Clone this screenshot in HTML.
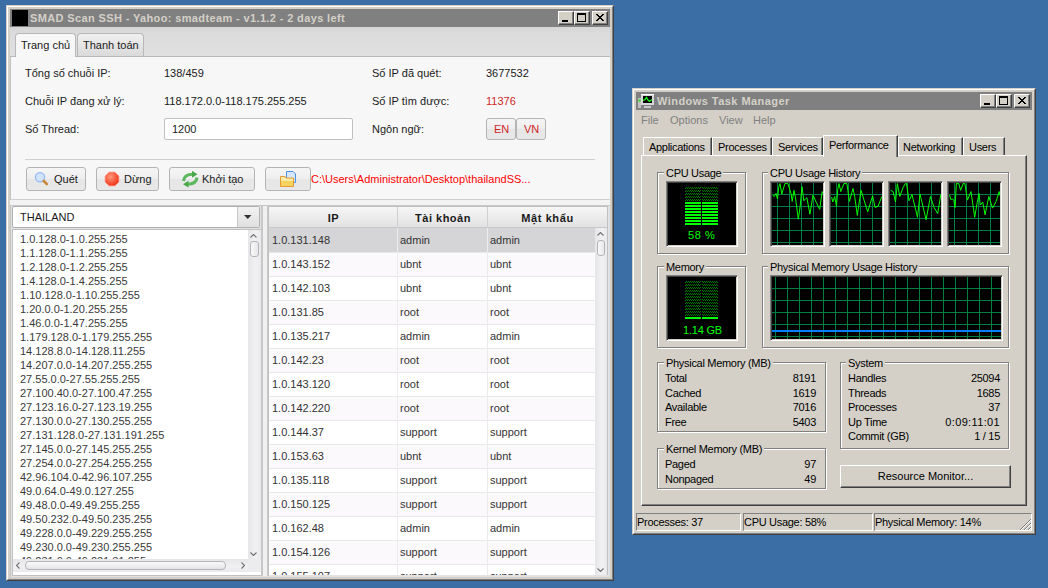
<!DOCTYPE html>
<html><head><meta charset="utf-8"><style>
*{box-sizing:border-box;margin:0;padding:0}
html,body{width:1048px;height:588px;overflow:hidden;background:#3a6ea5;font-family:"Liberation Sans",sans-serif;font-size:11px;color:#000}
.a{position:absolute}
.t{position:absolute;white-space:nowrap;line-height:13px;color:#1a1a1a}
.k{position:absolute;white-space:nowrap;line-height:13px;letter-spacing:-0.3px;color:#000}
.title{position:absolute;white-space:nowrap;line-height:13px;color:#d4d0c8;font-weight:bold}
.tb{position:absolute;width:16px;height:14px;background:#d4d0c8;border-top:1px solid #fff;border-left:1px solid #fff;border-right:1px solid #404040;border-bottom:1px solid #404040;box-shadow:inset -1px -1px 0 #808080}
.qbtn{position:absolute;border:1px solid #b4b4b4;border-radius:3px;background:linear-gradient(#f5f5f5,#eeeeee 50%,#e6e6e6 52%,#e8e8e8)}
.raised{position:absolute;background:#d4d0c8;border-top:1px solid #fff;border-left:1px solid #fff;border-right:1px solid #404040;border-bottom:1px solid #404040;box-shadow:inset -1px -1px 0 #808080}
.etch{position:absolute;border:1px solid #808080;box-shadow:1px 1px 0 #fff, inset 1px 1px 0 #fff}
.sunk{position:absolute;border-top:1px solid #808080;border-left:1px solid #808080;border-right:1px solid #fff;border-bottom:1px solid #fff}
</style></head><body>
<div class="a" style="left:6px;top:5px;width:608px;height:576px;background:#d4d0c8;border-top:1px solid #d4d0c8;border-left:1px solid #d4d0c8;border-right:1px solid #404040;border-bottom:1px solid #404040"><div class="a" style="left:0;top:0;right:0;bottom:0;border-top:1px solid #fff;border-left:1px solid #fff;border-right:1px solid #808080;border-bottom:1px solid #808080"></div></div>
<div class="a" style="left:10px;top:9px;width:600px;height:18px;background:#808080"></div>
<div class="a" style="left:12px;top:10px;width:16px;height:16px;background:#000"></div>
<div class="title" style="left:30px;top:12px;letter-spacing:0.37px">SMAD Scan SSH - Yahoo: smadteam - v1.1.2 - 2 days left</div>
<div class="tb" style="left:558px;top:11px"><div class="a" style="left:3px;top:8px;width:6px;height:2px;background:#000"></div></div>
<div class="tb" style="left:574px;top:11px"><div class="a" style="left:2px;top:1px;width:9px;height:9px;border:1px solid #000;border-top-width:2px"></div></div>
<div class="tb" style="left:592px;top:11px"><svg class="a" style="left:0;top:0" width="14" height="12" shape-rendering="crispEdges"><rect x="3" y="2" width="1" height="1"/><rect x="4" y="2" width="1" height="1"/><rect x="9" y="2" width="1" height="1"/><rect x="10" y="2" width="1" height="1"/><rect x="4" y="3" width="1" height="1"/><rect x="5" y="3" width="1" height="1"/><rect x="8" y="3" width="1" height="1"/><rect x="9" y="3" width="1" height="1"/><rect x="5" y="4" width="1" height="1"/><rect x="6" y="4" width="1" height="1"/><rect x="7" y="4" width="1" height="1"/><rect x="8" y="4" width="1" height="1"/><rect x="6" y="5" width="1" height="1"/><rect x="7" y="5" width="1" height="1"/><rect x="5" y="6" width="1" height="1"/><rect x="6" y="6" width="1" height="1"/><rect x="7" y="6" width="1" height="1"/><rect x="8" y="6" width="1" height="1"/><rect x="4" y="7" width="1" height="1"/><rect x="5" y="7" width="1" height="1"/><rect x="8" y="7" width="1" height="1"/><rect x="9" y="7" width="1" height="1"/><rect x="3" y="8" width="1" height="1"/><rect x="4" y="8" width="1" height="1"/><rect x="9" y="8" width="1" height="1"/><rect x="10" y="8" width="1" height="1"/></svg></div>
<div class="a" style="left:10px;top:27px;width:600px;height:550px;background:#e2e2e2"></div>
<div class="a" style="left:10px;top:27px;width:600px;height:29px;background:linear-gradient(#d6d6d6,#dcdcdc 25%,#e0e0e0)"></div>
<div class="a" style="left:10px;top:206px;width:1px;height:371px;background:#c4c4c4"></div>
<div class="a" style="left:15px;top:33px;width:61px;height:24px;background:#f7f7f7;border:1px solid #b8b8b8;border-bottom:none;border-radius:4px 4px 0 0"></div>
<div class="t" style="left:21px;top:39px;">Trang chủ</div>
<div class="a" style="left:77px;top:33px;width:67px;height:23px;background:linear-gradient(#f0f0f0,#dadada);border:1px solid #b8b8b8;border-bottom:none;border-radius:4px 4px 0 0"></div>
<div class="t" style="left:83px;top:39px;">Thanh toán</div>
<div class="a" style="left:10px;top:56px;width:600px;height:144px;background:#f7f7f7;border-top:1px solid #b8b8b8;border-left:1px solid #c4c4c4;border-bottom:1px solid #d0d0d0"></div>
<div class="a" style="left:10px;top:200px;width:600px;height:5px;background:#f3f3f3"></div>
<div class="a" style="left:10px;top:205px;width:600px;height:1px;background:#c8c8c8"></div>
<div class="a" style="left:16px;top:56px;width:59px;height:1px;background:#f7f7f7"></div>
<div class="t" style="left:25px;top:67px;">Tổng số chuỗi IP:</div>
<div class="t" style="left:25px;top:95px;">Chuỗi IP đang xử lý:</div>
<div class="t" style="left:25px;top:123px;">Số Thread:</div>
<div class="t" style="left:164px;top:67px;">138/459</div>
<div class="t" style="left:164px;top:95px;">118.172.0.0-118.175.255.255</div>
<div class="a" style="left:164px;top:118px;width:189px;height:22px;background:#fff;border:1px solid #c0c0c0;border-radius:2px"></div>
<div class="t" style="left:172px;top:123px;">1200</div>
<div class="t" style="left:372px;top:67px;">Số IP đã quét:</div>
<div class="t" style="left:372px;top:95px;">Số IP tìm được:</div>
<div class="t" style="left:372px;top:123px;">Ngôn ngữ:</div>
<div class="t" style="left:486px;top:67px;">3677532</div>
<div class="t" style="left:486px;top:95px;color:#d02828">11376</div>
<div class="qbtn" style="left:486px;top:118px;width:30px;height:22px"></div>
<div class="t" style="left:494px;top:123px;color:#d02828">EN</div>
<div class="qbtn" style="left:516px;top:118px;width:30px;height:22px"></div>
<div class="t" style="left:524px;top:123px;color:#d02828">VN</div>
<div class="a" style="left:25px;top:159px;width:570px;height:1px;background:#d0d0d0"></div>
<div class="qbtn" style="left:26px;top:167px;width:60px;height:24px"></div>
<div class="t" style="left:54px;top:173px;">Quét</div>
<div class="qbtn" style="left:96px;top:167px;width:63px;height:24px"></div>
<div class="t" style="left:124px;top:173px;">Dừng</div>
<div class="qbtn" style="left:169px;top:167px;width:86px;height:24px"></div>
<div class="t" style="left:202px;top:173px;">Khởi tạo</div>
<div class="qbtn" style="left:265px;top:167px;width:46px;height:24px"></div>
<div class="t" style="left:311px;top:173px;color:#ff0000">C:\Users\Administrator\Desktop\thailandSS...</div>
<svg class="a" style="left:0;top:0" width="320" height="200"><defs><radialGradient id="rg" cx="0.4" cy="0.35" r="0.7"><stop offset="0" stop-color="#ff9a7a"/><stop offset="1" stop-color="#f02a10"/></radialGradient><linearGradient id="gg" x1="0" y1="0" x2="0" y2="1"><stop offset="0" stop-color="#8ed88a"/><stop offset="1" stop-color="#3a9a3a"/></linearGradient></defs><circle cx="40" cy="177.3" r="4.6" fill="#d2e4fb" stroke="#92baf0" stroke-width="1.3"/><line x1="43.6" y1="180.8" x2="46.8" y2="184" stroke="#c8873c" stroke-width="2.6" stroke-linecap="round"/><polygon points="109.1,172 114.9,172 119,176.1 119,181.9 114.9,186 109.1,186 105,181.9 105,176.1" fill="url(#rg)" stroke="#ffb0a0" stroke-width="0.9"/><path d="M183.5,181 C184,175.5 188,174.2 193,174.2" fill="none" stroke="#5cb85c" stroke-width="3"/><polygon points="192,170.8 197.5,174.3 192,177.8" fill="#4aa84a"/><path d="M197,177.5 C196.5,183 192.5,184.2 187.5,184.2" fill="none" stroke="#5cb85c" stroke-width="3"/><polygon points="188.5,180.8 183,184.2 188.5,187.6" fill="#4aa84a"/><path d="M286.5,171.5 H293 L295.5,174 V182.5 H286.5 Z" fill="#d6e6fb" stroke="#4f8fe0" stroke-width="1"/><path d="M280.5,176.5 H285 L286,178 H293.5 V186.5 H280.5 Z" fill="#fbeaa6" stroke="#e39a32" stroke-width="1"/><rect x="281" y="181" width="12" height="5" fill="#f6d25e"/></svg>
<div class="a" style="left:12px;top:206px;width:248px;height:22px;background:#fff;border:1px solid #b0b0b0;border-radius:2px"></div>
<div class="a" style="left:237px;top:207px;width:22px;height:20px;background:linear-gradient(#f2f2f2,#e0e0e0);border-left:1px solid #c8c8c8"></div>
<svg class="a" style="left:244px;top:215px" width="8" height="4"><polygon points="0,0 7.5,0 3.75,4" fill="#333"/></svg>
<div class="t" style="left:20px;top:211px;">THAILAND</div>
<div class="a" style="left:12px;top:229px;width:250px;height:347px;background:#fff;border:1px solid #c0c0c0"></div>
<div class="a" style="left:13px;top:230px;width:235px;height:329px;overflow:hidden">
<div class="t" style="left:7px;top:3px;color:#3a3a3a">1.0.128.0-1.0.255.255</div>
<div class="t" style="left:7px;top:17px;color:#3a3a3a">1.1.128.0-1.1.255.255</div>
<div class="t" style="left:7px;top:31px;color:#3a3a3a">1.2.128.0-1.2.255.255</div>
<div class="t" style="left:7px;top:45px;color:#3a3a3a">1.4.128.0-1.4.255.255</div>
<div class="t" style="left:7px;top:59px;color:#3a3a3a">1.10.128.0-1.10.255.255</div>
<div class="t" style="left:7px;top:73px;color:#3a3a3a">1.20.0.0-1.20.255.255</div>
<div class="t" style="left:7px;top:87px;color:#3a3a3a">1.46.0.0-1.47.255.255</div>
<div class="t" style="left:7px;top:101px;color:#3a3a3a">1.179.128.0-1.179.255.255</div>
<div class="t" style="left:7px;top:115px;color:#3a3a3a">14.128.8.0-14.128.11.255</div>
<div class="t" style="left:7px;top:129px;color:#3a3a3a">14.207.0.0-14.207.255.255</div>
<div class="t" style="left:7px;top:143px;color:#3a3a3a">27.55.0.0-27.55.255.255</div>
<div class="t" style="left:7px;top:157px;color:#3a3a3a">27.100.40.0-27.100.47.255</div>
<div class="t" style="left:7px;top:171px;color:#3a3a3a">27.123.16.0-27.123.19.255</div>
<div class="t" style="left:7px;top:185px;color:#3a3a3a">27.130.0.0-27.130.255.255</div>
<div class="t" style="left:7px;top:199px;color:#3a3a3a">27.131.128.0-27.131.191.255</div>
<div class="t" style="left:7px;top:213px;color:#3a3a3a">27.145.0.0-27.145.255.255</div>
<div class="t" style="left:7px;top:227px;color:#3a3a3a">27.254.0.0-27.254.255.255</div>
<div class="t" style="left:7px;top:241px;color:#3a3a3a">42.96.104.0-42.96.107.255</div>
<div class="t" style="left:7px;top:255px;color:#3a3a3a">49.0.64.0-49.0.127.255</div>
<div class="t" style="left:7px;top:269px;color:#3a3a3a">49.48.0.0-49.49.255.255</div>
<div class="t" style="left:7px;top:283px;color:#3a3a3a">49.50.232.0-49.50.235.255</div>
<div class="t" style="left:7px;top:297px;color:#3a3a3a">49.228.0.0-49.229.255.255</div>
<div class="t" style="left:7px;top:311px;color:#3a3a3a">49.230.0.0-49.230.255.255</div>
<div class="t" style="left:7px;top:325px;color:#3a3a3a">49.231.0.0-49.231.31.255</div>
</div>
<div class="a" style="left:248px;top:230px;width:13px;height:329px;background:linear-gradient(90deg,#e6e6e9,#f1f1f3 60%,#e9e9ec)"></div>
<svg class="a" style="left:250px;top:234px" width="7" height="4"><path d="M0.5,3.5 L3.5,0.5 L6.5,3.5" fill="none" stroke="#707070" stroke-width="1.1"/></svg>
<div class="a" style="left:250px;top:241px;width:9px;height:16px;border:1px solid #b4b4b8;border-radius:3px;background:linear-gradient(90deg,#f8f8f8,#e8e8ea)"></div>
<svg class="a" style="left:250px;top:552px" width="7" height="4"><path d="M0.5,0.5 L3.5,3.5 L6.5,0.5" fill="none" stroke="#707070" stroke-width="1.1"/></svg>
<div class="a" style="left:13px;top:559px;width:235px;height:13px;background:linear-gradient(#e6e6e9,#f1f1f3 60%,#e9e9ec)"></div>
<svg class="a" style="left:16px;top:562px" width="4" height="7"><path d="M3.5,0.5 L0.5,3.5 L3.5,6.5" fill="none" stroke="#707070" stroke-width="1.1"/></svg>
<div class="a" style="left:25px;top:561px;width:201px;height:9px;border:1px solid #b4b4b8;border-radius:4px;background:linear-gradient(#fafafa,#e4e4e6)"></div>
<svg class="a" style="left:241px;top:562px" width="4" height="7"><path d="M0.5,0.5 L3.5,3.5 L0.5,6.5" fill="none" stroke="#707070" stroke-width="1.1"/></svg>
<div class="a" style="left:248px;top:559px;width:13px;height:13px;background:#ececee"></div>
<div class="a" style="left:261px;top:206px;width:2px;height:370px;background:#c8c8c8"></div>
<div class="a" style="left:263px;top:206px;width:4px;height:370px;background:#f0f0f0"></div>
<div class="a" style="left:267px;top:206px;width:2px;height:370px;background:#c8c8c8"></div>
<div class="a" style="left:268px;top:206px;width:340px;height:369px;background:#fff;border:1px solid #c0c0c0"></div>
<div class="a" style="left:269px;top:207px;width:338px;height:368px;overflow:hidden">
<div class="a" style="left:0px;top:21px;width:326px;height:24px;background:#d5d5d7;"></div>
<div class="a" style="left:128px;top:21px;width:1px;height:24px;background:#ececec"></div>
<div class="a" style="left:218px;top:21px;width:1px;height:24px;background:#ececec"></div>
<div class="t" style="left:3px;top:27px;color:#333">1.0.131.148</div>
<div class="t" style="left:131px;top:27px;color:#333">admin</div>
<div class="t" style="left:221px;top:27px;color:#333">admin</div>
<div class="a" style="left:0px;top:45px;width:326px;height:24px;background:#fcf9fc;border-top:1px solid #e8e8e8"></div>
<div class="a" style="left:128px;top:45px;width:1px;height:24px;background:#ececec"></div>
<div class="a" style="left:218px;top:45px;width:1px;height:24px;background:#ececec"></div>
<div class="t" style="left:3px;top:51px;color:#333">1.0.143.152</div>
<div class="t" style="left:131px;top:51px;color:#333">ubnt</div>
<div class="t" style="left:221px;top:51px;color:#333">ubnt</div>
<div class="a" style="left:0px;top:69px;width:326px;height:24px;background:#ffffff;border-top:1px solid #e8e8e8"></div>
<div class="a" style="left:128px;top:69px;width:1px;height:24px;background:#ececec"></div>
<div class="a" style="left:218px;top:69px;width:1px;height:24px;background:#ececec"></div>
<div class="t" style="left:3px;top:75px;color:#333">1.0.142.103</div>
<div class="t" style="left:131px;top:75px;color:#333">ubnt</div>
<div class="t" style="left:221px;top:75px;color:#333">ubnt</div>
<div class="a" style="left:0px;top:93px;width:326px;height:24px;background:#fcf9fc;border-top:1px solid #e8e8e8"></div>
<div class="a" style="left:128px;top:93px;width:1px;height:24px;background:#ececec"></div>
<div class="a" style="left:218px;top:93px;width:1px;height:24px;background:#ececec"></div>
<div class="t" style="left:3px;top:99px;color:#333">1.0.131.85</div>
<div class="t" style="left:131px;top:99px;color:#333">root</div>
<div class="t" style="left:221px;top:99px;color:#333">root</div>
<div class="a" style="left:0px;top:117px;width:326px;height:24px;background:#ffffff;border-top:1px solid #e8e8e8"></div>
<div class="a" style="left:128px;top:117px;width:1px;height:24px;background:#ececec"></div>
<div class="a" style="left:218px;top:117px;width:1px;height:24px;background:#ececec"></div>
<div class="t" style="left:3px;top:123px;color:#333">1.0.135.217</div>
<div class="t" style="left:131px;top:123px;color:#333">admin</div>
<div class="t" style="left:221px;top:123px;color:#333">admin</div>
<div class="a" style="left:0px;top:141px;width:326px;height:24px;background:#fcf9fc;border-top:1px solid #e8e8e8"></div>
<div class="a" style="left:128px;top:141px;width:1px;height:24px;background:#ececec"></div>
<div class="a" style="left:218px;top:141px;width:1px;height:24px;background:#ececec"></div>
<div class="t" style="left:3px;top:147px;color:#333">1.0.142.23</div>
<div class="t" style="left:131px;top:147px;color:#333">root</div>
<div class="t" style="left:221px;top:147px;color:#333">root</div>
<div class="a" style="left:0px;top:165px;width:326px;height:24px;background:#ffffff;border-top:1px solid #e8e8e8"></div>
<div class="a" style="left:128px;top:165px;width:1px;height:24px;background:#ececec"></div>
<div class="a" style="left:218px;top:165px;width:1px;height:24px;background:#ececec"></div>
<div class="t" style="left:3px;top:171px;color:#333">1.0.143.120</div>
<div class="t" style="left:131px;top:171px;color:#333">root</div>
<div class="t" style="left:221px;top:171px;color:#333">root</div>
<div class="a" style="left:0px;top:189px;width:326px;height:24px;background:#fcf9fc;border-top:1px solid #e8e8e8"></div>
<div class="a" style="left:128px;top:189px;width:1px;height:24px;background:#ececec"></div>
<div class="a" style="left:218px;top:189px;width:1px;height:24px;background:#ececec"></div>
<div class="t" style="left:3px;top:195px;color:#333">1.0.142.220</div>
<div class="t" style="left:131px;top:195px;color:#333">root</div>
<div class="t" style="left:221px;top:195px;color:#333">root</div>
<div class="a" style="left:0px;top:213px;width:326px;height:24px;background:#ffffff;border-top:1px solid #e8e8e8"></div>
<div class="a" style="left:128px;top:213px;width:1px;height:24px;background:#ececec"></div>
<div class="a" style="left:218px;top:213px;width:1px;height:24px;background:#ececec"></div>
<div class="t" style="left:3px;top:219px;color:#333">1.0.144.37</div>
<div class="t" style="left:131px;top:219px;color:#333">support</div>
<div class="t" style="left:221px;top:219px;color:#333">support</div>
<div class="a" style="left:0px;top:237px;width:326px;height:24px;background:#fcf9fc;border-top:1px solid #e8e8e8"></div>
<div class="a" style="left:128px;top:237px;width:1px;height:24px;background:#ececec"></div>
<div class="a" style="left:218px;top:237px;width:1px;height:24px;background:#ececec"></div>
<div class="t" style="left:3px;top:243px;color:#333">1.0.153.63</div>
<div class="t" style="left:131px;top:243px;color:#333">ubnt</div>
<div class="t" style="left:221px;top:243px;color:#333">ubnt</div>
<div class="a" style="left:0px;top:261px;width:326px;height:24px;background:#ffffff;border-top:1px solid #e8e8e8"></div>
<div class="a" style="left:128px;top:261px;width:1px;height:24px;background:#ececec"></div>
<div class="a" style="left:218px;top:261px;width:1px;height:24px;background:#ececec"></div>
<div class="t" style="left:3px;top:267px;color:#333">1.0.135.118</div>
<div class="t" style="left:131px;top:267px;color:#333">support</div>
<div class="t" style="left:221px;top:267px;color:#333">support</div>
<div class="a" style="left:0px;top:285px;width:326px;height:24px;background:#fcf9fc;border-top:1px solid #e8e8e8"></div>
<div class="a" style="left:128px;top:285px;width:1px;height:24px;background:#ececec"></div>
<div class="a" style="left:218px;top:285px;width:1px;height:24px;background:#ececec"></div>
<div class="t" style="left:3px;top:291px;color:#333">1.0.150.125</div>
<div class="t" style="left:131px;top:291px;color:#333">support</div>
<div class="t" style="left:221px;top:291px;color:#333">support</div>
<div class="a" style="left:0px;top:309px;width:326px;height:24px;background:#ffffff;border-top:1px solid #e8e8e8"></div>
<div class="a" style="left:128px;top:309px;width:1px;height:24px;background:#ececec"></div>
<div class="a" style="left:218px;top:309px;width:1px;height:24px;background:#ececec"></div>
<div class="t" style="left:3px;top:315px;color:#333">1.0.162.48</div>
<div class="t" style="left:131px;top:315px;color:#333">admin</div>
<div class="t" style="left:221px;top:315px;color:#333">admin</div>
<div class="a" style="left:0px;top:333px;width:326px;height:24px;background:#fcf9fc;border-top:1px solid #e8e8e8"></div>
<div class="a" style="left:128px;top:333px;width:1px;height:24px;background:#ececec"></div>
<div class="a" style="left:218px;top:333px;width:1px;height:24px;background:#ececec"></div>
<div class="t" style="left:3px;top:339px;color:#333">1.0.154.126</div>
<div class="t" style="left:131px;top:339px;color:#333">support</div>
<div class="t" style="left:221px;top:339px;color:#333">support</div>
<div class="a" style="left:0px;top:357px;width:326px;height:24px;background:#ffffff;border-top:1px solid #e8e8e8"></div>
<div class="a" style="left:128px;top:357px;width:1px;height:24px;background:#ececec"></div>
<div class="a" style="left:218px;top:357px;width:1px;height:24px;background:#ececec"></div>
<div class="t" style="left:3px;top:363px;color:#333">1.0.155.107</div>
<div class="t" style="left:131px;top:363px;color:#333">support</div>
<div class="t" style="left:221px;top:363px;color:#333">support</div>
<div class="a" style="left:0px;top:0px;width:338px;height:21px;background:linear-gradient(#f6f6f6,#e2e2e2);border-bottom:1px solid #c8c8c8"></div>
<div class="a" style="left:128px;top:0px;width:1px;height:21px;background:#d0d0d0"></div>
<div class="a" style="left:218px;top:0px;width:1px;height:21px;background:#d0d0d0"></div>
<div class="t" style="left:0px;top:5px;font-weight:bold;width:129px;text-align:center;letter-spacing:0.5px">IP</div>
<div class="t" style="left:129px;top:5px;font-weight:bold;width:90px;text-align:center;letter-spacing:0.5px">Tài khoản</div>
<div class="t" style="left:219px;top:5px;font-weight:bold;width:119px;text-align:center;letter-spacing:0.6px">Mật khẩu</div>
</div>
<div class="a" style="left:595px;top:228px;width:12px;height:347px;background:linear-gradient(90deg,#e6e6e9,#f1f1f3 60%,#e9e9ec)"></div>
<svg class="a" style="left:597px;top:232px" width="7" height="4"><path d="M0.5,3.5 L3.5,0.5 L6.5,3.5" fill="none" stroke="#707070" stroke-width="1.1"/></svg>
<div class="a" style="left:597px;top:240px;width:8px;height:16px;border:1px solid #b4b4b8;border-radius:3px;background:linear-gradient(90deg,#f8f8f8,#e8e8ea)"></div>
<svg class="a" style="left:597px;top:568px" width="7" height="4"><path d="M0.5,0.5 L3.5,3.5 L6.5,0.5" fill="none" stroke="#707070" stroke-width="1.1"/></svg>
<div class="a" style="left:632px;top:88px;width:404px;height:447px;background:#d4d0c8;border-top:1px solid #d4d0c8;border-left:1px solid #d4d0c8;border-right:1px solid #404040;border-bottom:1px solid #404040"><div class="a" style="left:0;top:0;right:0;bottom:0;border-top:1px solid #fff;border-left:1px solid #fff;border-right:1px solid #808080;border-bottom:1px solid #808080"></div></div>
<div class="a" style="left:636px;top:92px;width:396px;height:18px;background:#808080"></div>
<div class="title" style="left:657px;top:95px;letter-spacing:0.45px">Windows Task Manager</div>
<svg class="a" style="left:637px;top:93px" width="18" height="16"><rect x="4" y="1" width="13" height="11" fill="#d8d8d8"/><rect x="4" y="1" width="13" height="1" fill="#fff"/><rect x="6" y="3" width="9" height="7" fill="#000"/><path d="M6,7.5 L8,6.5 L9.5,4.5 L11,7 L12.5,8.5 L15,6.5" fill="none" stroke="#20f020" stroke-width="1.3"/><rect x="7" y="13" width="7" height="2" fill="#c8c8c8"/><rect x="1" y="5" width="3" height="10" fill="#c0c0c0"/><rect x="1.5" y="6.5" width="2" height="2" fill="#20e020"/></svg>
<div class="tb" style="left:980px;top:94px"><div class="a" style="left:3px;top:8px;width:6px;height:2px;background:#000"></div></div>
<div class="tb" style="left:996px;top:94px"><div class="a" style="left:2px;top:1px;width:9px;height:9px;border:1px solid #000;border-top-width:2px"></div></div>
<div class="tb" style="left:1014px;top:94px"><svg class="a" style="left:0;top:0" width="14" height="12" shape-rendering="crispEdges"><rect x="3" y="2" width="1" height="1"/><rect x="4" y="2" width="1" height="1"/><rect x="9" y="2" width="1" height="1"/><rect x="10" y="2" width="1" height="1"/><rect x="4" y="3" width="1" height="1"/><rect x="5" y="3" width="1" height="1"/><rect x="8" y="3" width="1" height="1"/><rect x="9" y="3" width="1" height="1"/><rect x="5" y="4" width="1" height="1"/><rect x="6" y="4" width="1" height="1"/><rect x="7" y="4" width="1" height="1"/><rect x="8" y="4" width="1" height="1"/><rect x="6" y="5" width="1" height="1"/><rect x="7" y="5" width="1" height="1"/><rect x="5" y="6" width="1" height="1"/><rect x="6" y="6" width="1" height="1"/><rect x="7" y="6" width="1" height="1"/><rect x="8" y="6" width="1" height="1"/><rect x="4" y="7" width="1" height="1"/><rect x="5" y="7" width="1" height="1"/><rect x="8" y="7" width="1" height="1"/><rect x="9" y="7" width="1" height="1"/><rect x="3" y="8" width="1" height="1"/><rect x="4" y="8" width="1" height="1"/><rect x="9" y="8" width="1" height="1"/><rect x="10" y="8" width="1" height="1"/></svg></div>
<div class="t" style="left:641px;top:114px;color:#808080">File</div>
<div class="t" style="left:670px;top:114px;color:#808080">Options</div>
<div class="t" style="left:719px;top:114px;color:#808080">View</div>
<div class="t" style="left:753px;top:114px;color:#808080">Help</div>
<div class="raised" style="left:641px;top:155px;width:386px;height:351px;box-shadow:inset -1px -1px 0 #808080"></div>
<div class="a" style="left:643px;top:137px;width:69px;height:18px;background:#d4d0c8;border-top:1px solid #fff;border-left:1px solid #fff;border-right:1px solid #404040;box-shadow:inset -1px 0 0 #808080"></div>
<div class="k" style="left:649px;top:141px;">Applications</div>
<div class="a" style="left:712px;top:137px;width:60px;height:18px;background:#d4d0c8;border-top:1px solid #fff;border-left:1px solid #fff;border-right:1px solid #404040;box-shadow:inset -1px 0 0 #808080"></div>
<div class="k" style="left:718px;top:141px;">Processes</div>
<div class="a" style="left:772px;top:137px;width:51px;height:18px;background:#d4d0c8;border-top:1px solid #fff;border-left:1px solid #fff;border-right:1px solid #404040;box-shadow:inset -1px 0 0 #808080"></div>
<div class="k" style="left:778px;top:141px;">Services</div>
<div class="a" style="left:898px;top:137px;width:65px;height:18px;background:#d4d0c8;border-top:1px solid #fff;border-left:1px solid #fff;border-right:1px solid #404040;box-shadow:inset -1px 0 0 #808080"></div>
<div class="k" style="left:903px;top:141px;">Networking</div>
<div class="a" style="left:963px;top:137px;width:42px;height:18px;background:#d4d0c8;border-top:1px solid #fff;border-left:1px solid #fff;border-right:1px solid #404040;box-shadow:inset -1px 0 0 #808080"></div>
<div class="k" style="left:969px;top:141px;">Users</div>
<div class="a" style="left:823px;top:135px;width:75px;height:22px;background:#d4d0c8;border-top:1px solid #fff;border-left:1px solid #fff;border-right:1px solid #404040;box-shadow:inset -1px 0 0 #808080"></div>
<div class="k" style="left:829px;top:139px;">Performance</div>
<div class="etch" style="left:657px;top:172px;width:89px;height:82px"></div>
<div class="k" style="left:664px;top:167px;background:#d4d0c8;padding:0 2px">CPU Usage</div>
<div class="etch" style="left:762px;top:172px;width:247px;height:82px"></div>
<div class="k" style="left:768px;top:167px;background:#d4d0c8;padding:0 2px">CPU Usage History</div>
<div class="etch" style="left:657px;top:266px;width:89px;height:82px"></div>
<div class="k" style="left:664px;top:261px;background:#d4d0c8;padding:0 2px">Memory</div>
<div class="etch" style="left:762px;top:266px;width:247px;height:82px"></div>
<div class="k" style="left:768px;top:261px;background:#d4d0c8;padding:0 2px">Physical Memory Usage History</div>
<div class="etch" style="left:657px;top:362px;width:169px;height:70px"></div>
<div class="k" style="left:664px;top:357px;background:#d4d0c8;padding:0 2px">Physical Memory (MB)</div>
<div class="etch" style="left:657px;top:448px;width:169px;height:41px"></div>
<div class="k" style="left:664px;top:443px;background:#d4d0c8;padding:0 2px">Kernel Memory (MB)</div>
<div class="etch" style="left:840px;top:362px;width:169px;height:87px"></div>
<div class="k" style="left:846px;top:357px;background:#d4d0c8;padding:0 2px">System</div>
<div class="a" style="left:666px;top:181px;width:72px;height:66px;background:#000;border-top:1px solid #808080;border-left:1px solid #808080;border-right:1px solid #fff;border-bottom:1px solid #fff;box-shadow:inset 1px 1px 0 #404040, inset -1px -1px 0 #d4d0c8"></div>
<svg class="a" style="left:685px;top:187px" width="34" height="39"><defs><pattern id="dp" width="2" height="3" patternUnits="userSpaceOnUse"><rect x="1" y="0" width="1" height="1" fill="#008000"/><rect x="0" y="1" width="1" height="1" fill="#008000"/></pattern></defs><rect x="0" y="0" width="16" height="3" fill="url(#dp)"/><rect x="17" y="0" width="16" height="3" fill="url(#dp)"/><rect x="0" y="3" width="16" height="3" fill="url(#dp)"/><rect x="17" y="3" width="16" height="3" fill="url(#dp)"/><rect x="0" y="6" width="16" height="3" fill="url(#dp)"/><rect x="17" y="6" width="16" height="3" fill="url(#dp)"/><rect x="0" y="9" width="16" height="3" fill="url(#dp)"/><rect x="17" y="9" width="16" height="3" fill="url(#dp)"/><rect x="0" y="12" width="16" height="3" fill="url(#dp)"/><rect x="17" y="12" width="16" height="3" fill="url(#dp)"/><rect x="0" y="15" width="16" height="2" fill="#00ff00"/><rect x="17" y="15" width="16" height="2" fill="#00ff00"/><rect x="0" y="18" width="16" height="2" fill="#00ff00"/><rect x="17" y="18" width="16" height="2" fill="#00ff00"/><rect x="0" y="21" width="16" height="2" fill="#00ff00"/><rect x="17" y="21" width="16" height="2" fill="#00ff00"/><rect x="0" y="24" width="16" height="2" fill="#00ff00"/><rect x="17" y="24" width="16" height="2" fill="#00ff00"/><rect x="0" y="27" width="16" height="2" fill="#00ff00"/><rect x="17" y="27" width="16" height="2" fill="#00ff00"/><rect x="0" y="30" width="16" height="2" fill="#00ff00"/><rect x="17" y="30" width="16" height="2" fill="#00ff00"/><rect x="0" y="33" width="16" height="2" fill="#00ff00"/><rect x="17" y="33" width="16" height="2" fill="#00ff00"/><rect x="0" y="36" width="16" height="2" fill="#00ff00"/><rect x="17" y="36" width="16" height="2" fill="#00ff00"/></svg>
<div class="k" style="left:688px;top:229px;color:#00ff00;letter-spacing:0.6px">58 %</div>
<div class="a" style="left:770px;top:181px;width:55px;height:66px;background:#000;border-top:1px solid #808080;border-left:1px solid #808080;border-right:1px solid #fff;border-bottom:1px solid #fff;box-shadow:inset 1px 1px 0 #404040, inset -1px -1px 0 #d4d0c8"></div>
<svg class="a" style="left:772px;top:183px" width="51" height="62"><line x1="5.5" y1="0" x2="5.5" y2="62" stroke="#008040" stroke-width="1"/><line x1="17.5" y1="0" x2="17.5" y2="62" stroke="#008040" stroke-width="1"/><line x1="29.5" y1="0" x2="29.5" y2="62" stroke="#008040" stroke-width="1"/><line x1="41.5" y1="0" x2="41.5" y2="62" stroke="#008040" stroke-width="1"/><line x1="0" y1="11.5" x2="51" y2="11.5" stroke="#008040" stroke-width="1"/><line x1="0" y1="23.5" x2="51" y2="23.5" stroke="#008040" stroke-width="1"/><line x1="0" y1="35.5" x2="51" y2="35.5" stroke="#008040" stroke-width="1"/><line x1="0" y1="47.5" x2="51" y2="47.5" stroke="#008040" stroke-width="1"/><line x1="0" y1="59.5" x2="51" y2="59.5" stroke="#008040" stroke-width="1"/><polyline points="0.6,12.2 2.4,13.5 4.0,10.4 5.5,15.9 6.7,4.3 8.0,0.6 9.8,11.0 12.9,0.6 15.9,0.6 19.0,10.4 20.2,18.4 22.0,7.3 23.3,13.5 26.3,36.1 28.2,23.3 30.0,3.7 31.8,17.7 34.9,14.7 37.9,31.2 41.0,12.2 44.1,19.0 47.7,26.3 50.2,8.6 51.4,11.0" fill="none" stroke="#00ff00" stroke-width="1"/></svg>
<div class="a" style="left:829px;top:181px;width:55px;height:66px;background:#000;border-top:1px solid #808080;border-left:1px solid #808080;border-right:1px solid #fff;border-bottom:1px solid #fff;box-shadow:inset 1px 1px 0 #404040, inset -1px -1px 0 #d4d0c8"></div>
<svg class="a" style="left:831px;top:183px" width="51" height="62"><line x1="5.5" y1="0" x2="5.5" y2="62" stroke="#008040" stroke-width="1"/><line x1="17.5" y1="0" x2="17.5" y2="62" stroke="#008040" stroke-width="1"/><line x1="29.5" y1="0" x2="29.5" y2="62" stroke="#008040" stroke-width="1"/><line x1="41.5" y1="0" x2="41.5" y2="62" stroke="#008040" stroke-width="1"/><line x1="0" y1="11.5" x2="51" y2="11.5" stroke="#008040" stroke-width="1"/><line x1="0" y1="23.5" x2="51" y2="23.5" stroke="#008040" stroke-width="1"/><line x1="0" y1="35.5" x2="51" y2="35.5" stroke="#008040" stroke-width="1"/><line x1="0" y1="47.5" x2="51" y2="47.5" stroke="#008040" stroke-width="1"/><line x1="0" y1="59.5" x2="51" y2="59.5" stroke="#008040" stroke-width="1"/><polyline points="0.6,14.1 1.8,19.0 3.7,13.5 5.5,23.3 6.7,6.7 8.0,0.6 9.8,8.6 12.9,0.6 15.9,0.6 18.4,18.4 22.0,5.5 23.9,14.7 26.3,32.4 30.0,7.3 36.7,28.8 41.6,12.9 44.1,24.5 47.1,23.3 50.8,13.5" fill="none" stroke="#00ff00" stroke-width="1"/></svg>
<div class="a" style="left:888px;top:181px;width:55px;height:66px;background:#000;border-top:1px solid #808080;border-left:1px solid #808080;border-right:1px solid #fff;border-bottom:1px solid #fff;box-shadow:inset 1px 1px 0 #404040, inset -1px -1px 0 #d4d0c8"></div>
<svg class="a" style="left:890px;top:183px" width="51" height="62"><line x1="5.5" y1="0" x2="5.5" y2="62" stroke="#008040" stroke-width="1"/><line x1="17.5" y1="0" x2="17.5" y2="62" stroke="#008040" stroke-width="1"/><line x1="29.5" y1="0" x2="29.5" y2="62" stroke="#008040" stroke-width="1"/><line x1="41.5" y1="0" x2="41.5" y2="62" stroke="#008040" stroke-width="1"/><line x1="0" y1="11.5" x2="51" y2="11.5" stroke="#008040" stroke-width="1"/><line x1="0" y1="23.5" x2="51" y2="23.5" stroke="#008040" stroke-width="1"/><line x1="0" y1="35.5" x2="51" y2="35.5" stroke="#008040" stroke-width="1"/><line x1="0" y1="47.5" x2="51" y2="47.5" stroke="#008040" stroke-width="1"/><line x1="0" y1="59.5" x2="51" y2="59.5" stroke="#008040" stroke-width="1"/><polyline points="0.6,7.3 3.1,8.6 5.5,19.0 7.3,0.6 9.8,13.5 12.9,4.9 15.3,0.6 16.5,0.6 19.0,17.7 22.0,11.6 27.5,34.3 30.0,11.0 36.1,36.7 40.4,13.5 44.1,24.5 47.7,30.6 50.8,11.6" fill="none" stroke="#00ff00" stroke-width="1"/></svg>
<div class="a" style="left:947px;top:181px;width:55px;height:66px;background:#000;border-top:1px solid #808080;border-left:1px solid #808080;border-right:1px solid #fff;border-bottom:1px solid #fff;box-shadow:inset 1px 1px 0 #404040, inset -1px -1px 0 #d4d0c8"></div>
<svg class="a" style="left:949px;top:183px" width="51" height="62"><line x1="5.5" y1="0" x2="5.5" y2="62" stroke="#008040" stroke-width="1"/><line x1="17.5" y1="0" x2="17.5" y2="62" stroke="#008040" stroke-width="1"/><line x1="29.5" y1="0" x2="29.5" y2="62" stroke="#008040" stroke-width="1"/><line x1="41.5" y1="0" x2="41.5" y2="62" stroke="#008040" stroke-width="1"/><line x1="0" y1="11.5" x2="51" y2="11.5" stroke="#008040" stroke-width="1"/><line x1="0" y1="23.5" x2="51" y2="23.5" stroke="#008040" stroke-width="1"/><line x1="0" y1="35.5" x2="51" y2="35.5" stroke="#008040" stroke-width="1"/><line x1="0" y1="47.5" x2="51" y2="47.5" stroke="#008040" stroke-width="1"/><line x1="0" y1="59.5" x2="51" y2="59.5" stroke="#008040" stroke-width="1"/><polyline points="0.6,12.2 1.8,16.5 3.7,15.9 4.9,17.7 6.1,24.5 7.3,0.6 9.8,0.6 11.6,7.3 14.1,0.6 15.9,0.6 18.4,17.1 22.0,8.6 25.7,34.3 28.2,19.6 30.0,10.4 31.2,22.0 33.7,19.0 36.1,31.8 39.8,13.5 43.5,25.1 47.1,18.4 50.2,8.6 51.4,13.5" fill="none" stroke="#00ff00" stroke-width="1"/></svg>
<div class="a" style="left:666px;top:275px;width:72px;height:66px;background:#000;border-top:1px solid #808080;border-left:1px solid #808080;border-right:1px solid #fff;border-bottom:1px solid #fff;box-shadow:inset 1px 1px 0 #404040, inset -1px -1px 0 #d4d0c8"></div>
<svg class="a" style="left:685px;top:281px" width="34" height="39"><defs><pattern id="dp" width="2" height="3" patternUnits="userSpaceOnUse"><rect x="1" y="0" width="1" height="1" fill="#008000"/><rect x="0" y="1" width="1" height="1" fill="#008000"/></pattern></defs><rect x="0" y="0" width="16" height="3" fill="url(#dp)"/><rect x="17" y="0" width="16" height="3" fill="url(#dp)"/><rect x="0" y="3" width="16" height="3" fill="url(#dp)"/><rect x="17" y="3" width="16" height="3" fill="url(#dp)"/><rect x="0" y="6" width="16" height="3" fill="url(#dp)"/><rect x="17" y="6" width="16" height="3" fill="url(#dp)"/><rect x="0" y="9" width="16" height="3" fill="url(#dp)"/><rect x="17" y="9" width="16" height="3" fill="url(#dp)"/><rect x="0" y="12" width="16" height="3" fill="url(#dp)"/><rect x="17" y="12" width="16" height="3" fill="url(#dp)"/><rect x="0" y="15" width="16" height="3" fill="url(#dp)"/><rect x="17" y="15" width="16" height="3" fill="url(#dp)"/><rect x="0" y="18" width="16" height="3" fill="url(#dp)"/><rect x="17" y="18" width="16" height="3" fill="url(#dp)"/><rect x="0" y="21" width="16" height="3" fill="url(#dp)"/><rect x="17" y="21" width="16" height="3" fill="url(#dp)"/><rect x="0" y="24" width="16" height="3" fill="url(#dp)"/><rect x="17" y="24" width="16" height="3" fill="url(#dp)"/><rect x="0" y="27" width="16" height="3" fill="url(#dp)"/><rect x="17" y="27" width="16" height="3" fill="url(#dp)"/><rect x="0" y="30" width="16" height="3" fill="url(#dp)"/><rect x="17" y="30" width="16" height="3" fill="url(#dp)"/><rect x="0" y="33" width="16" height="3" fill="url(#dp)"/><rect x="17" y="33" width="16" height="3" fill="url(#dp)"/><rect x="0" y="36" width="16" height="2" fill="#00ff00"/><rect x="17" y="36" width="16" height="2" fill="#00ff00"/></svg>
<div class="k" style="left:683px;top:324px;color:#00ff00;letter-spacing:-0.2px">1.14 GB</div>
<div class="a" style="left:770px;top:275px;width:233px;height:66px;background:#000;border-top:1px solid #808080;border-left:1px solid #808080;border-right:1px solid #fff;border-bottom:1px solid #fff;box-shadow:inset 1px 1px 0 #404040, inset -1px -1px 0 #d4d0c8"></div>
<svg class="a" style="left:772px;top:277px" width="229" height="62"><line x1="3.5" y1="0" x2="3.5" y2="62" stroke="#008040" stroke-width="1"/><line x1="15.5" y1="0" x2="15.5" y2="62" stroke="#008040" stroke-width="1"/><line x1="27.5" y1="0" x2="27.5" y2="62" stroke="#008040" stroke-width="1"/><line x1="39.5" y1="0" x2="39.5" y2="62" stroke="#008040" stroke-width="1"/><line x1="51.5" y1="0" x2="51.5" y2="62" stroke="#008040" stroke-width="1"/><line x1="63.5" y1="0" x2="63.5" y2="62" stroke="#008040" stroke-width="1"/><line x1="75.5" y1="0" x2="75.5" y2="62" stroke="#008040" stroke-width="1"/><line x1="87.5" y1="0" x2="87.5" y2="62" stroke="#008040" stroke-width="1"/><line x1="99.5" y1="0" x2="99.5" y2="62" stroke="#008040" stroke-width="1"/><line x1="111.5" y1="0" x2="111.5" y2="62" stroke="#008040" stroke-width="1"/><line x1="123.5" y1="0" x2="123.5" y2="62" stroke="#008040" stroke-width="1"/><line x1="135.5" y1="0" x2="135.5" y2="62" stroke="#008040" stroke-width="1"/><line x1="147.5" y1="0" x2="147.5" y2="62" stroke="#008040" stroke-width="1"/><line x1="159.5" y1="0" x2="159.5" y2="62" stroke="#008040" stroke-width="1"/><line x1="171.5" y1="0" x2="171.5" y2="62" stroke="#008040" stroke-width="1"/><line x1="183.5" y1="0" x2="183.5" y2="62" stroke="#008040" stroke-width="1"/><line x1="195.5" y1="0" x2="195.5" y2="62" stroke="#008040" stroke-width="1"/><line x1="207.5" y1="0" x2="207.5" y2="62" stroke="#008040" stroke-width="1"/><line x1="219.5" y1="0" x2="219.5" y2="62" stroke="#008040" stroke-width="1"/><line x1="0" y1="11.5" x2="229" y2="11.5" stroke="#008040" stroke-width="1"/><line x1="0" y1="23.5" x2="229" y2="23.5" stroke="#008040" stroke-width="1"/><line x1="0" y1="35.5" x2="229" y2="35.5" stroke="#008040" stroke-width="1"/><line x1="0" y1="47.5" x2="229" y2="47.5" stroke="#008040" stroke-width="1"/><line x1="0" y1="59.5" x2="229" y2="59.5" stroke="#008040" stroke-width="1"/><rect x="0" y="53" width="229" height="2" fill="#0080ff"/></svg>
<div class="k" style="left:665px;top:372px;">Total</div>
<div class="k" style="left:766px;top:372px;width:50px;text-align:right">8191</div>
<div class="k" style="left:665px;top:387px;">Cached</div>
<div class="k" style="left:766px;top:387px;width:50px;text-align:right">1619</div>
<div class="k" style="left:665px;top:401px;">Available</div>
<div class="k" style="left:766px;top:401px;width:50px;text-align:right">7016</div>
<div class="k" style="left:665px;top:416px;">Free</div>
<div class="k" style="left:766px;top:416px;width:50px;text-align:right">5403</div>
<div class="k" style="left:665px;top:458px;">Paged</div>
<div class="k" style="left:766px;top:458px;width:50px;text-align:right">97</div>
<div class="k" style="left:665px;top:473px;">Nonpaged</div>
<div class="k" style="left:766px;top:473px;width:50px;text-align:right">49</div>
<div class="k" style="left:848px;top:372px;">Handles</div>
<div class="k" style="left:900px;top:372px;width:100px;text-align:right">25094</div>
<div class="k" style="left:848px;top:387px;">Threads</div>
<div class="k" style="left:900px;top:387px;width:100px;text-align:right">1685</div>
<div class="k" style="left:848px;top:401px;">Processes</div>
<div class="k" style="left:900px;top:401px;width:100px;text-align:right">37</div>
<div class="k" style="left:848px;top:416px;">Up Time</div>
<div class="k" style="left:900px;top:416px;width:100px;text-align:right;letter-spacing:0.35px">0:09:11:01</div>
<div class="k" style="left:848px;top:430px;">Commit (GB)</div>
<div class="k" style="left:900px;top:430px;width:100px;text-align:right">1 / 15</div>
<div class="raised" style="left:840px;top:465px;width:171px;height:23px"></div>
<div class="k" style="left:840px;top:470px;width:171px;text-align:center;letter-spacing:0">Resource Monitor...</div>
<div class="sunk" style="left:636px;top:513px;width:105px;height:18px"></div>
<div class="k" style="left:637px;top:516px;">Processes: 37</div>
<div class="sunk" style="left:743px;top:513px;width:130px;height:18px"></div>
<div class="k" style="left:744px;top:516px;">CPU Usage: 58%</div>
<div class="sunk" style="left:874px;top:513px;width:158px;height:18px"></div>
<div class="k" style="left:875px;top:516px;">Physical Memory: 14%</div>
<svg class="a" style="left:1019px;top:518px" width="13" height="13"><path d="M12 1L1 12M12 5L5 12M12 9L9 12" stroke="#808080" stroke-width="1"/><path d="M12 2L2 12M12 6L6 12M12 10L10 12" stroke="#fff" stroke-width="1"/></svg>
</body></html>
